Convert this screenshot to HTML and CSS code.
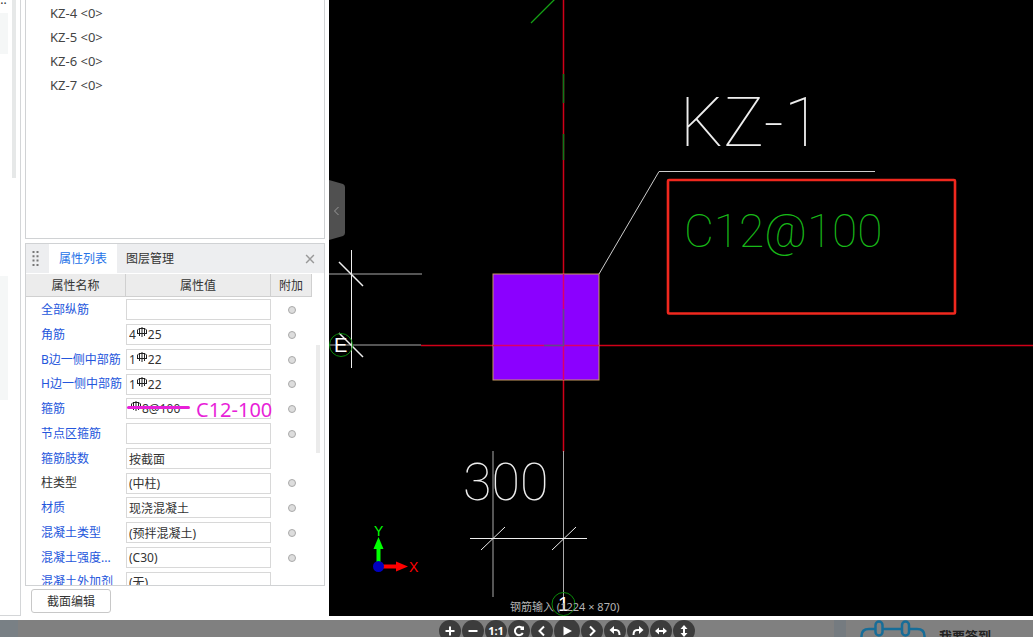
FILE: index.html
```html
<!DOCTYPE html>
<html lang="zh-CN">
<head>
<meta charset="utf-8">
<title>钢筋输入</title>
<link rel="stylesheet" href="styles.css">
</head>
<body>
<svg class="defs" aria-hidden="true">
  <symbol id="rebar" viewBox="0 0 10 10"><path d="M5 0V10M2.500 1.500V9M7.500 1.500V9M0 6.500H10M2 1.500H8L9.500 3V6.500M2 1.500L.5 3V6.500" fill="none" stroke="#222"/></symbol>
</svg>
<main class="window">
  <aside class="rail">
    <span class="rail-more">...</span>
    <div class="rail-block rail-block-top"></div>
    <div class="rail-block rail-block-mid"></div>
    <div class="rail-scroll"></div>
  </aside>
  <section class="side">
    <ul class="members">
      <li>KZ-4 &lt;0&gt;</li>
      <li>KZ-5 &lt;0&gt;</li>
      <li>KZ-6 &lt;0&gt;</li>
      <li>KZ-7 &lt;0&gt;</li>
    </ul>
    <div class="props">
      <div class="tabs">
        <svg class="grip" viewBox="0 0 8 15"><path d="M1.5 0V15M5.5 0V15" stroke="#777" stroke-width="2" stroke-dasharray="2 2.3"/></svg>
        <button class="tab active">属性列表</button>
        <button class="tab">图层管理</button>
        <button class="close" aria-label="关闭"><svg viewBox="0 0 9 9"><path d="M1 1L8 8M8 1L1 8" stroke="#999" stroke-width="1.3"/></svg></button>
      </div>
      <div class="table-area">
        <table class="grid">
          <colgroup><col class="c-name"><col class="c-value"><col class="c-extra"></colgroup>
          <thead><tr><th>属性名称</th><th>属性值</th><th>附加</th></tr></thead>
          <tbody>
            <tr><td><label for="p1">全部纵筋</label></td><td><input class="field" id="p1" value=""></td><td><input type="radio" class="dot" aria-label="附加"></td></tr>
            <tr><td><label for="p2">角筋</label></td><td class="rebar"><input class="field" id="p2" value="4&#8195;25"><svg class="mark"><use href="#rebar"/></svg></td><td><input type="radio" class="dot" aria-label="附加"></td></tr>
            <tr><td><label for="p3">B边一侧中部筋</label></td><td class="rebar"><input class="field" id="p3" value="1&#8195;22"><svg class="mark"><use href="#rebar"/></svg></td><td><input type="radio" class="dot" aria-label="附加"></td></tr>
            <tr><td><label for="p4">H边一侧中部筋</label></td><td class="rebar"><input class="field" id="p4" value="1&#8195;22"><svg class="mark"><use href="#rebar"/></svg></td><td><input type="radio" class="dot" aria-label="附加"></td></tr>
            <tr><td><label for="p5">箍筋</label></td><td class="rebar lead"><input class="field" id="p5" value="&#8195;8@100"><svg class="mark"><use href="#rebar"/></svg><span class="strike"></span><span class="note">C12-100</span></td><td><input type="radio" class="dot" aria-label="附加"></td></tr>
            <tr><td><label for="p6">节点区箍筋</label></td><td><input class="field" id="p6" value=""></td><td><input type="radio" class="dot" aria-label="附加"></td></tr>
            <tr><td><label for="p7">箍筋肢数</label></td><td><input class="field" id="p7" value="按截面"></td><td></td></tr>
            <tr><td><label class="plain" for="p8">柱类型</label></td><td><input class="field" id="p8" value="(中柱)"></td><td><input type="radio" class="dot" aria-label="附加"></td></tr>
            <tr><td><label for="p9">材质</label></td><td><input class="field" id="p9" value="现浇混凝土"></td><td><input type="radio" class="dot" aria-label="附加"></td></tr>
            <tr><td><label for="p10">混凝土类型</label></td><td><input class="field" id="p10" value="(预拌混凝土)"></td><td><input type="radio" class="dot" aria-label="附加"></td></tr>
            <tr><td><label for="p11">混凝土强度...</label></td><td><input class="field" id="p11" value="(C30)"></td><td><input type="radio" class="dot" aria-label="附加"></td></tr>
            <tr><td><label for="p12">混凝土外加剂</label></td><td><input class="field" id="p12" value="(无)"></td><td></td></tr>
          </tbody>
        </table>
        <div class="thumb"></div>
      </div>
    </div>
    <button class="edit">截面编辑</button>
  </section>
  <section class="canvas">
    <svg class="drawing" viewBox="329 0 704 616" preserveAspectRatio="xMinYMin slice">
      <g fill="none" stroke-width="1">
        <path d="M531 23L555 -1" stroke="#14a014" stroke-width="1.300"/>
        <path d="M563.500 0V452" stroke="#d00018" stroke-width="1.500"/>
        <path d="M563.500 74V103M563.500 134V160" stroke="#0b7a1c" stroke-width="1.500"/>
        <path d="M421 345.500H1033" stroke="#d00018" stroke-width="1.500"/>
        <rect x="493" y="274" width="106" height="106" fill="#8b00ff" stroke="#c89a60"/>
        <path d="M563.500 274V380M493 345.500H599" stroke="#dc0068" stroke-width="1.500"/>
        <path d="M563.500 309V345.500H544" stroke="#5a4a90" stroke-width="1.500"/>
        <path d="M599 274L659 171.500H875" stroke="#ccc"/>
        <path d="M329 274H422M329 345H421" stroke="#aaa"/>
        <path d="M351.500 250V368" stroke="#eee"/>
        <path d="M339 262L363 286M339 333L363 357" stroke="#eee" stroke-width="1.500"/>
        <circle cx="341" cy="345" r="11.500" stroke="#0a8a0a"/>
        <path d="M493 451V597M563.500 451V610" stroke="#aaa"/>
        <path d="M470 538.500H587M481 550L505 527M552 550L576 527" stroke="#eee"/>
        <circle cx="563.500" cy="604" r="11.500" stroke="#0a8a0a"/>
        <rect x="668" y="180" width="287" height="133.500" rx="1" stroke="#f0281e" stroke-width="2.600"/>
      </g>
      <text class="cad name" x="680" y="146">KZ-1</text>
      <text class="cad spec" x="684" y="247">C12@100</text>
      <text class="cad size" x="463" y="500">300</text>
      <text class="axis" x="334" y="352">E</text>
      <text class="axis" x="558" y="611">1</text>
      <path d="M378.500 567V546" stroke="#0f0" stroke-width="4"/><path d="M373.500 549L378.500 537L383.500 549Z" fill="#0f0"/>
      <path d="M378 566.500H398" stroke="#f00" stroke-width="4"/><path d="M396 561.500L408 566.500L396 571.500Z" fill="#f00"/>
      <circle cx="378.500" cy="566.500" r="5.500" fill="#0000c0"/>
      <text class="ucs up" x="374" y="536">Y</text>
      <text class="ucs right" x="409" y="572">X</text>
    </svg>
    <button class="handle" aria-label="收起"><svg viewBox="0 0 16 60"><path d="M0 0L14 4Q16 5 16 7V53Q16 55 14 56L0 60Z" fill="#505050"/><path d="M9.500 27L5.500 31L9.500 35" fill="none" stroke="#999"/></svg></button>
    <p class="caption">钢筋输入 (1224 × 870)</p>
  </section>
</main>
<footer class="bar">
  <div class="bar-shade"></div>
  <div class="tools">
    <button class="tool" aria-label="放大"><svg viewBox="0 0 22 22"><path d="M6.500 11H15.500M11 6.500V15.500"/></svg></button>
    <button class="tool" aria-label="缩小"><svg viewBox="0 0 22 22"><path d="M6.500 11H15.500"/></svg></button>
    <button class="tool ratio">1:1</button>
    <button class="tool" aria-label="刷新"><svg viewBox="0 0 22 22"><path d="M14.500 8.500A4.200 4.200 0 1 0 14.800 13M15 6.500V9H12.500"/></svg></button>
    <button class="tool" aria-label="上一张"><svg viewBox="0 0 22 22"><path d="M13 6.500L8.500 11L13 15.500"/></svg></button>
    <button class="tool play" aria-label="播放"><svg viewBox="0 0 26 26"><path class="solid" d="M9.500 8.500L18 13L9.500 17.500Z"/></svg></button>
    <button class="tool" aria-label="下一张"><svg viewBox="0 0 22 22"><path d="M9 6.500L13.500 11L9 15.500"/></svg></button>
    <button class="tool" aria-label="左旋"><svg viewBox="0 0 22 22"><path d="M8 10H12Q15.500 10 15.500 15"/><path class="solid" d="M5.500 10L10 6V14Z"/></svg></button>
    <button class="tool" aria-label="右旋"><svg viewBox="0 0 22 22"><path d="M14 10H10Q6.500 10 6.500 15"/><path class="solid" d="M16.500 10L12 6V14Z"/></svg></button>
    <button class="tool" aria-label="水平翻转"><svg viewBox="0 0 22 22"><path d="M7 11H15"/><path class="solid" d="M5 11L9 7.500V14.500ZM17 11L13 7.500V14.500Z"/></svg></button>
    <button class="tool" aria-label="垂直翻转"><svg viewBox="0 0 22 22"><path d="M11 7V15"/><path class="solid" d="M11 5L14.500 9H7.500ZM11 17L14.500 13H7.500Z"/></svg></button>
  </div>
  <div class="bar-split"></div>
  <a class="checkin" href="#"><svg viewBox="0 0 66 40"><path d="M1.500 40V16Q1.500 9 9 9H15M23 9H42M50 9H57Q64.500 9 64.500 16V40"/><rect x="15.500" y="1.500" width="7" height="14" rx="3.500"/><rect x="42" y="1.500" width="7" height="14" rx="3.500"/></svg><span>我要签到</span></a>
</footer>
</body>
</html>
```
FILE: styles.css
```css
* { box-sizing: border-box; }
body {
  margin: 0;
  height: 100vh;
  display: flex;
  flex-direction: column;
  overflow: hidden;
  background: #fff;
  color: #333;
  font: 12px/16px "Noto Sans", "Noto Sans CJK SC", sans-serif;
}
button, input { font: inherit; color: inherit; margin: 0; padding: 0; }
button { border: 0; background: none; }
.defs { display: none; }
.window { flex: 1; min-height: 0; display: flex; margin-bottom: 4px; }

.rail { position: relative; width: 21px; border-right: 1px solid #d4d6d8; border-bottom: 1px solid #d4d6d8; }
.rail-more { position: absolute; left: -3px; top: -8px; }
.rail-block { position: absolute; left: 0; width: 8px; background: #f5f7f7; }
.rail-block-top { top: 13px; height: 41px; }
.rail-block-mid { top: 276px; height: 124px; }
.rail-scroll { position: absolute; right: 4px; top: 0; width: 4px; height: 178px; background: #e6e8e8; }

.side { width: 308px; padding: 0 4px 3px; display: flex; flex-direction: column; align-items: stretch; }
.members { flex: 1; margin: 0 0 4px; padding: 1px 0 0 24px; list-style: none; font-size: 13px; line-height: 24px; border: 1px solid #d0d2d4; border-top: 0; color: #444; }
.props { height: 343px; display: flex; flex-direction: column; border: 1px solid #d0d2d4; }
.tabs { display: flex; height: 29px; background: #edeef0; align-items: center; }
.grip { width: 8px; height: 15px; margin: 0 9px 0 6px; }
.tab { height: 29px; padding: 0 9px; }
.tab.active { background: #fff; color: #2472e8; padding: 0 10px; }
.close { margin-left: auto; padding-right: 9px; line-height: 0; }
.close svg { width: 10px; height: 10px; }
.table-area { position: relative; flex: 1; min-height: 0; overflow: hidden; padding-top: 1px; }
.thumb { position: absolute; right: 4px; top: 72px; width: 4px; height: 108px; background: #ebebeb; }
.grid { table-layout: fixed; width: 286px; border-collapse: separate; border-spacing: 0; }
.c-name { width: 100px; }
.c-value { width: 145px; }
.c-extra { width: 41px; }
.grid th { height: 23px; padding: 2px 0 0; background: #ececec; border-right: 1px solid #d0d0d0; border-bottom: 1px solid #d0d0d0; font-weight: 400; }
.grid td { height: 25px; padding: 0; white-space: nowrap; }
.grid tr:nth-child(4n) td { height: 24px; }
.grid label { padding-left: 15px; color: #2456dc; }
.grid label.plain { color: #333; }
.grid td:last-child { text-align: center; line-height: 0; }
.field { display: block; width: 145px; height: 21px; padding: 0 2px; border: 1px solid #d8d8d8; border-radius: 0; background: #fff; outline: 0; }
.dot { appearance: none; width: 8px; height: 8px; border: 1px solid #aaa; border-radius: 50%; background: #ddd; }
.rebar { position: relative; }
.mark { position: absolute; left: 11px; top: 5px; width: 10px; height: 10px; }
.lead .mark { left: 5px; }
.lead .field { padding-left: 3px; }
.strike { position: absolute; left: 1px; top: 10px; width: 63px; height: 3px; border-radius: 2px; background: #e81fd8; }
.note { position: absolute; left: 70px; top: 2px; font-size: 20px; line-height: 24px; color: #e81fd8; }
.edit { width: 80px; height: 24px; margin: 3px 0 0 6px; padding-top: 1px; border: 1px solid #c8c8c8; border-radius: 3px; background: #fff; }

.canvas { position: relative; flex: 1; min-width: 0; background: #000; overflow: hidden; }
.drawing { display: block; width: 100%; height: 100%; }
.cad { font-family: "Roboto", "Inter", sans-serif; font-weight: 100; fill: #eee; }
.name { font-size: 68px; }
.spec { font-size: 46px; fill: #18b818; }
.size { font-size: 52px; }
.axis { font: 20px "Liberation Sans", sans-serif; fill: #fff; }
.ucs { font: 14px "Liberation Sans", sans-serif; }
.up { fill: #0f0; }
.right { fill: #f00; }
.handle { position: absolute; left: 0; top: 180px; width: 16px; height: 60px; line-height: 0; }
.caption { position: absolute; left: 181px; bottom: 1px; margin: 0; font-size: 11px; color: #b4b4b4; }

.bar { display: flex; height: 17px; overflow: hidden; background: #808080; }
.bar-shade { width: 18px; height: 17px; background: #798085; }
.tools { flex: 1; display: flex; align-items: center; gap: 1px; height: 22px; padding-left: 421px; }
.tool { width: 22px; height: 22px; flex: none; border-radius: 50%; background: #3c3c3c; color: #fff; line-height: 0; }
.tool svg { width: 100%; height: 100%; fill: none; stroke: #fff; stroke-width: 2; }
.tool .solid { fill: #fff; stroke: none; }
.tool.play { width: 26px; height: 26px; }
.ratio { font-size: 11px; font-weight: 700; }
.bar-split { width: 12px; background: #757b80; }
.checkin { display: flex; width: 187px; padding-left: 14px; gap: 13px; color: #222; font-size: 13px; font-weight: 700; line-height: 32px; text-decoration: none; }
.checkin svg { width: 66px; height: 40px; fill: none; stroke: #176d98; stroke-width: 2.5px; }
```
